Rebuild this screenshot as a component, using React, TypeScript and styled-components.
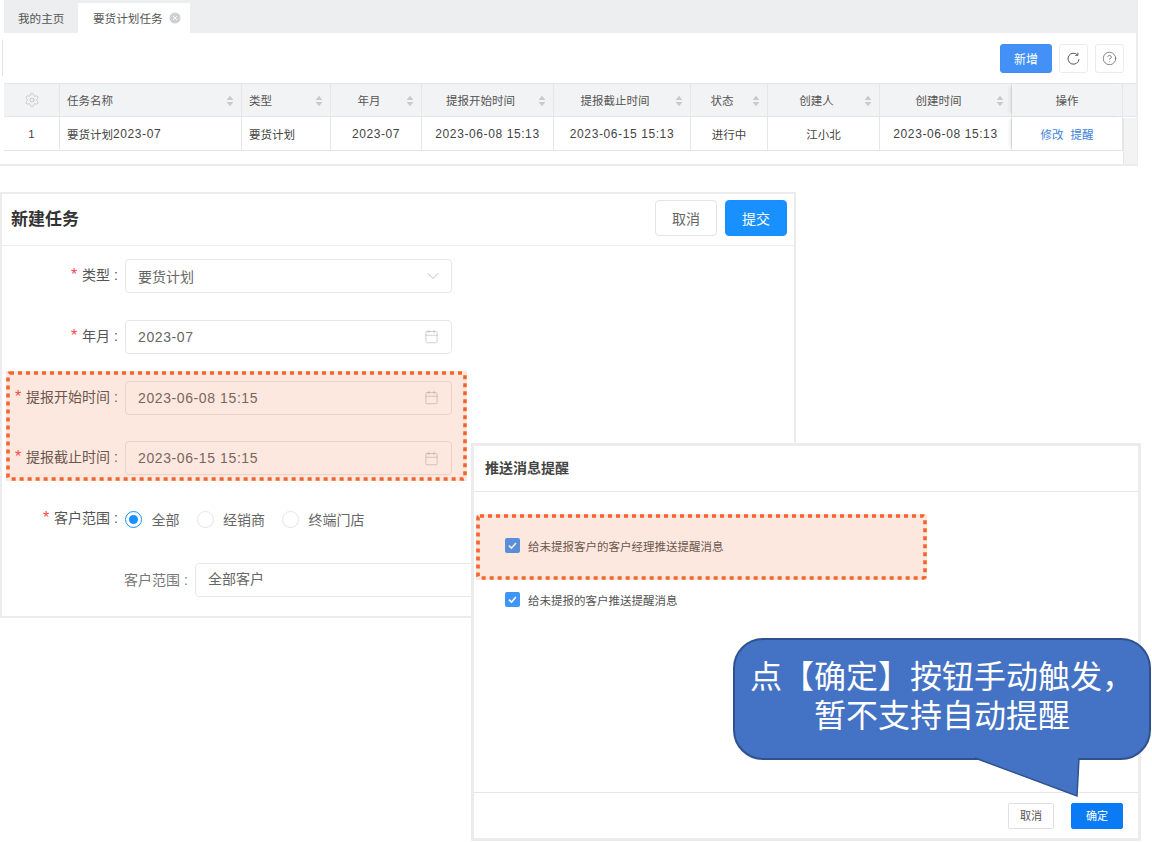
import React from "react";
import styled, { createGlobalStyle } from "styled-components";
import { Settings, CircleHelp, Calendar, ChevronDown } from "lucide-react";

const Global = createGlobalStyle`
  html, body { margin: 0; padding: 0; background: #fff; }
  body { font-family: "Liberation Sans", "Noto Sans CJK SC", sans-serif; color: #555; }
  * { box-sizing: border-box; }
`;

const Canvas = styled.div`
  position: relative;
  width: 1152px;
  height: 842px;
  overflow: hidden;
`;

/* ---------- list panel ---------- */
const ListPanel = styled.section`
  position: absolute;
  left: 0;
  top: 0;
  width: 1138px;
  height: 166px;
  padding-left: 4px;
  border-right: 2px solid #ececed;
  border-bottom: 2px solid #ececed;
  display: flex;
  flex-direction: column;
`;
const TabBar = styled.div`
  height: 33px;
  flex: none;
  background: #edeeef;
  display: flex;
  align-items: flex-end;
`;
const Tab = styled.div<{ $active?: boolean }>`
  height: 30px;
  width: ${(p) => (p.$active ? 112 : 74)}px;
  background: ${(p) => (p.$active ? "#fff" : "transparent")};
  display: flex;
  align-items: center;
  gap: 6px;
  padding-left: ${(p) => (p.$active ? 15 : 14)}px;
  font-size: 11.6px;
  color: #555;
`;
const Toolbar = styled.div`
  position: relative;
  height: 50px;
  flex: none;
  display: flex;
  justify-content: flex-end;
  align-items: flex-start;
  gap: 7px;
  padding: 11px 12px 0 0;
`;
const LeftTick = styled.span`
  position: absolute;
  left: -2px;
  top: 7px;
  width: 1px;
  height: 36px;
  background: #e4e4e4;
`;
const AddButton = styled.button`
  width: 52px;
  height: 29px;
  border: 1px solid #3f8df5;
  border-radius: 3px;
  background: #4391f7;
  color: #fff;
  font: inherit;
  font-size: 12px;
  padding: 0;
`;
const IconButton = styled.button`
  width: 29px;
  height: 29px;
  border: 1px solid #ebebeb;
  border-radius: 3px;
  background: #fff;
  color: #555;
  display: flex;
  align-items: center;
  justify-content: center;
  padding: 0;
`;
const TableWrap = styled.div`
  flex: 1;
  display: flex;
  flex-direction: column;
  border-top: 1px solid #e6e6e7;
  position: relative;
`;
const columns = "56px 182px 89px 91px 132px 137px 77px 112px 132px 111px 14px";
const HeadRow = styled.div`
  display: grid;
  grid-template-columns: ${columns};
  height: 33px;
  background: #f2f3f4;
  border-bottom: 1px solid #e6e6e7;
  font-size: 11.5px;
  color: #555;
`;
const BodyRow = styled.div`
  display: grid;
  grid-template-columns: ${columns};
  height: 34px;
  border-bottom: 1px solid #e6e6e7;
  font-size: 11.5px;
  color: #444;
`;
const Cell = styled.div<{ $left?: boolean; $shadow?: boolean; $plain?: boolean }>`
  position: relative;
  display: flex;
  align-items: center;
  justify-content: ${(p) => (p.$left ? "flex-start" : "center")};
  padding: ${(p) => (p.$left ? "0 0 0 7px" : "0 14px 0 0")};
  border-right: ${(p) => (p.$plain ? "none" : "1px solid #e6e6e7")};
  box-shadow: ${(p) => (p.$shadow ? "-3px 0 4px -2px rgba(0,0,0,.14)" : "none")};
`;
const Center = styled(Cell)`
  padding: 0;
`;
const TableNum = styled.span`
  font-size: 12px;
  letter-spacing: 0.6px;
  margin-top: 1px;
`;
const FieldNum = styled.span`
  letter-spacing: 0.6px;
`;
const SortSlot = styled.span`
  position: absolute;
  right: 7px;
  top: 11px;
  display: flex;
`;
const LinkText = styled.span`
  color: #3f7fdb;
  margin: 0 3.5px;
`;
const Gutter = styled.div`
  position: absolute;
  left: 1119px;
  top: 34px;
  bottom: 0;
  width: 14px;
  background: #f3f3f4;
  border-left: 1px solid #e6e6e7;
`;

const SortIcon = () => (
  <svg width="8" height="12" viewBox="0 0 8 12">
    <path d="M4 .8 7.4 5H.6z" fill="#c8c9cb" />
    <path d="M4 11.2.6 7h6.8z" fill="#c8c9cb" />
  </svg>
);

const RefreshIcon = () => (
  <svg width="15" height="15" viewBox="0 0 15 15" fill="none" stroke="currentColor" strokeWidth="1">
    <path d="M11.6 4A5.5 5.5 0 1 0 13 8.2" />
    <path d="M11.9 1.6V4.4H9.2" strokeWidth="0.9" />
  </svg>
);

/* ---------- form panel ---------- */
const FormPanel = styled.section`
  position: absolute;
  left: 0;
  top: 192px;
  width: 796px;
  height: 426px;
  border: 2px solid #ececed;
  background: #fff;
`;
const FormHeader = styled.header`
  height: 52px;
  border-bottom: 1px solid #eeeeef;
  display: flex;
  align-items: center;
  justify-content: space-between;
  padding: 0 7px 4px 9px;
`;
const FormTitle = styled.h2`
  margin: 0;
  font-size: 17px;
  font-weight: 700;
  color: #333;
`;
const HeaderActions = styled.div`
  display: flex;
  gap: 8px;
`;
const FormButton = styled.button<{ $primary?: boolean }>`
  width: 62px;
  height: 36px;
  border-radius: 4px;
  border: 1px solid ${(p) => (p.$primary ? "#1890ff" : "#e4e4e4")};
  background: ${(p) => (p.$primary ? "#1890ff" : "#fff")};
  color: ${(p) => (p.$primary ? "#fff" : "#666")};
  font: inherit;
  font-size: 14px;
  padding: 0;
`;
const FormBody = styled.div`
  display: flex;
  flex-direction: column;
  gap: 26.8px;
  padding-top: 13px;
`;
const Row = styled.div`
  display: flex;
  align-items: center;
  height: 34px;
`;
const Label = styled.label<{ $width?: number; $muted?: boolean }>`
  flex: none;
  width: ${(p) => p.$width ?? 116}px;
  margin-right: 7px;
  padding-bottom: ${(p) => (p.$muted ? 0 : 2)}px;
  text-align: right;
  font-size: 14px;
  line-height: 20px;
  color: ${(p) => (p.$muted ? "#777" : "#555")};
  white-space: nowrap;
`;
const Star = styled.span`
  color: #f5484c;
  margin-right: 5px;
  font-size: 16px;
`;
const Colon = styled.span`
  margin-left: 4px;
`;
const Field = styled.div<{ $wide?: boolean }>`
  flex: none;
  width: ${(p) => (p.$wide ? 600 : 327)}px;
  height: 34px;
  border: 1px solid #e7e7e8;
  border-radius: 4px;
  display: flex;
  align-items: center;
  justify-content: space-between;
  padding: 0 12px ${(p) => (p.$wide ? 3 : 0)}px;
  font-size: 14px;
  color: #666;
  background: #fff;
`;
const SelectArrow = styled(ChevronDown)`
  margin-right: -4px;
`;
const RadioGroup = styled.div`
  display: flex;
  align-items: center;
`;
const RadioDot = styled.span<{ $on?: boolean }>`
  width: 17px;
  height: 17px;
  border-radius: 50%;
  border: 1px solid ${(p) => (p.$on ? "#1890ff" : "#e4e4e4")};
  background: #fff;
  display: flex;
  align-items: center;
  justify-content: center;
  margin-right: 9.5px;
  &::after {
    content: "";
    display: ${(p) => (p.$on ? "block" : "none")};
    width: 9px;
    height: 9px;
    border-radius: 50%;
    background: #1890ff;
  }
`;
const RadioText = styled.span`
  font-size: 14px;
  color: #666;
  margin-right: 17px;
`;

/* ---------- dialog ---------- */
const Dialog = styled.section`
  position: absolute;
  left: 471px;
  top: 443px;
  width: 670px;
  height: 398px;
  border: 3px solid #ececed;
  background: #fff;
  display: flex;
  flex-direction: column;
  z-index: 2;
`;
const DialogHeader = styled.header`
  height: 46px;
  flex: none;
  border-bottom: 1px solid #e7e7e8;
  display: flex;
  align-items: center;
  padding: 0 0 4px 11px;
  font-size: 14px;
  font-weight: 700;
  color: #444;
`;
const DialogBody = styled.div`
  flex: 1;
  display: flex;
  flex-direction: column;
  gap: 39px;
  padding: 46px 0 0 31px;
`;
const CheckRow = styled.div`
  display: flex;
  align-items: center;
  gap: 8px;
  height: 15px;
  font-size: 11.5px;
  color: #555;
`;
const CheckBox = styled.span`
  width: 15px;
  height: 15px;
  border-radius: 2px;
  background: #3f96f7;
  display: flex;
  align-items: center;
  justify-content: center;
`;
const DialogFooter = styled.footer`
  height: 46px;
  flex: none;
  border-top: 1px solid #e7e7e8;
  display: flex;
  justify-content: flex-end;
  gap: 17px;
  padding: 10px 15px 0 0;
`;
const SmallButton = styled.button<{ $primary?: boolean }>`
  width: ${(p) => (p.$primary ? 52 : 46)}px;
  height: 26px;
  border-radius: 2px;
  border: 1px solid ${(p) => (p.$primary ? "#0a7bf5" : "#dfdfe0")};
  background: ${(p) => (p.$primary ? "#0a7bf5" : "#fff")};
  color: ${(p) => (p.$primary ? "#fff" : "#555")};
  font: inherit;
  font-size: 11px;
  padding: 0 0 2px;
`;

/* ---------- annotations ---------- */
const Highlight = styled.div<{ $x: number; $y: number; $w: number; $h: number }>`
  position: absolute;
  left: ${(p) => p.$x}px;
  top: ${(p) => p.$y}px;
  width: ${(p) => p.$w}px;
  height: ${(p) => p.$h}px;
  background: rgba(243, 98, 44, 0.15);
  z-index: 3;
  pointer-events: none;
`;
const FrameSvg = styled.svg`
  position: absolute;
  inset: 0;
  overflow: visible;
`;
const Callout = styled.div`
  position: absolute;
  left: 733px;
  top: 638px;
  width: 418px;
  height: 122px;
  background: #4472c4;
  border: 2px solid #2f528f;
  border-radius: 30px;
  color: #fff;
  font-size: 32px;
  line-height: 39px;
  text-align: center;
  display: flex;
  align-items: center;
  justify-content: center;
  padding-bottom: 5px;
  z-index: 4;
  white-space: nowrap;
`;
const CalloutTail = styled.svg`
  position: absolute;
  left: 239px;
  top: 118px;
  overflow: visible;
`;

const Frame = ({ w, h }: { w: number; h: number }) => (
  <FrameSvg width={w} height={h}>
    <rect x="2" y="2" width={w - 4} height={h - 4} rx="2" fill="none" stroke="#f4642c" strokeWidth="3.6" strokeDasharray="4 4" />
  </FrameSvg>
);

const CalIcon = () => <Calendar size={15} strokeWidth={1} color="#b5b5b5" />;

function CheckMark() {
  return (
    <svg width="11" height="11" viewBox="0 0 11 11">
      <path d="M2 5.6 4.5 8 9 3" fill="none" stroke="#fff" strokeWidth="1.6" />
    </svg>
  );
}

const heads = [
  ["任务名称", true],
  ["类型", true],
  ["年月", false],
  ["提报开始时间", false],
  ["提报截止时间", false],
  ["状态", false],
  ["创建人", false],
  ["创建时间", false],
] as const;

export default function App() {
  return (
    <Canvas>
      <Global />
      <ListPanel>
        <TabBar>
          <Tab>我的主页</Tab>
          <Tab $active>
            要货计划任务
            <svg width="12" height="12" viewBox="0 0 12 12">
              <circle cx="6" cy="6" r="5.5" fill="#cfd0d2" />
              <path d="M4 4l4 4M8 4l-4 4" stroke="#fff" strokeWidth="1" />
            </svg>
          </Tab>
        </TabBar>
        <Toolbar>
          <LeftTick />
          <AddButton>新增</AddButton>
          <IconButton><RefreshIcon /></IconButton>
          <IconButton><CircleHelp size={15} strokeWidth={1.1} /></IconButton>
        </Toolbar>
        <TableWrap>
          <HeadRow>
            <Center><Settings size={16} strokeWidth={1} color="#b4b5b7" /></Center>
            {heads.map(([t, left]) => (
              <Cell key={t} $left={left}>
                {t}
                <SortSlot><SortIcon /></SortSlot>
              </Cell>
            ))}
            <Center $shadow>操作</Center>
            <Center $plain />
          </HeadRow>
          <BodyRow>
            <Center>1</Center>
            <Cell $left>要货计划<TableNum>2023-07</TableNum></Cell>
            <Cell $left>要货计划</Cell>
            <Center><TableNum>2023-07</TableNum></Center>
            <Center><TableNum>2023-06-08 15:13</TableNum></Center>
            <Center><TableNum>2023-06-15 15:13</TableNum></Center>
            <Center>进行中</Center>
            <Center>江小北</Center>
            <Center><TableNum>2023-06-08 15:13</TableNum></Center>
            <Center $shadow><LinkText>修改</LinkText><LinkText>提醒</LinkText></Center>
            <Center $plain />
          </BodyRow>
          <Gutter />
        </TableWrap>
      </ListPanel>

      <FormPanel>
        <FormHeader>
          <FormTitle>新建任务</FormTitle>
          <HeaderActions>
            <FormButton>取消</FormButton>
            <FormButton $primary>提交</FormButton>
          </HeaderActions>
        </FormHeader>
        <FormBody>
          <Row>
            <Label><Star>*</Star>类型<Colon>:</Colon></Label>
            <Field>要货计划<SelectArrow size={20} strokeWidth={0.9} color="#a8a8a8" /></Field>
          </Row>
          <Row>
            <Label><Star>*</Star>年月<Colon>:</Colon></Label>
            <Field><FieldNum>2023-07</FieldNum><CalIcon /></Field>
          </Row>
          <Row>
            <Label><Star>*</Star>提报开始时间<Colon>:</Colon></Label>
            <Field><FieldNum>2023-06-08 15:15</FieldNum><CalIcon /></Field>
          </Row>
          <Row>
            <Label><Star>*</Star>提报截止时间<Colon>:</Colon></Label>
            <Field><FieldNum>2023-06-15 15:15</FieldNum><CalIcon /></Field>
          </Row>
          <Row>
            <Label><Star>*</Star>客户范围<Colon>:</Colon></Label>
            <RadioGroup>
              <RadioDot $on /><RadioText>全部</RadioText>
              <RadioDot /><RadioText>经销商</RadioText>
              <RadioDot /><RadioText>终端门店</RadioText>
            </RadioGroup>
          </Row>
          <Row>
            <Label $width={186} $muted>客户范围<Colon>:</Colon></Label>
            <Field $wide>全部客户</Field>
          </Row>
        </FormBody>
      </FormPanel>

      <Highlight $x={6} $y={371} $w={461} $h={110}>
        <Frame w={461} h={110} />
      </Highlight>

      <Dialog>
        <DialogHeader>推送消息提醒</DialogHeader>
        <DialogBody>
          <CheckRow>
            <CheckBox><CheckMark /></CheckBox>
            给未提报客户的客户经理推送提醒消息
          </CheckRow>
          <CheckRow>
            <CheckBox><CheckMark /></CheckBox>
            给未提报的客户推送提醒消息
          </CheckRow>
        </DialogBody>
        <DialogFooter>
          <SmallButton>取消</SmallButton>
          <SmallButton $primary>确定</SmallButton>
        </DialogFooter>
      </Dialog>

      <Highlight $x={476} $y={514} $w={451} $h={66}>
        <Frame w={451} h={66} />
      </Highlight>

      <Callout>
        <span>点【确定】按钮手动触发，<br />暂不支持自动提醒</span>
        <CalloutTail width="106" height="40" viewBox="0 0 106 40">
          <path d="M1 0 L105 0 L103 38 Z" fill="#4472c4" />
          <path d="M1 0 L103 38 L105 0" fill="none" stroke="#2f528f" strokeWidth="1.5" />
        </CalloutTail>
      </Callout>
    </Canvas>
  );
}
